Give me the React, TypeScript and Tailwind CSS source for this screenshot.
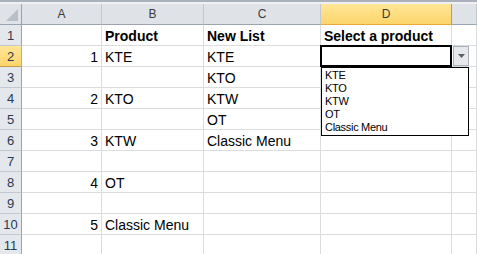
import React from "react";

const cols = ["A", "B", "C", "D", ""];

type Row = { a?: string; b?: string; c?: string; d?: string; bold?: boolean };

const rows: Row[] = [
  { b: "Product", c: "New List", d: "Select a product", bold: true },
  { a: "1", b: "KTE", c: "KTE" },
  { c: "KTO" },
  { a: "2", b: "KTO", c: "KTW" },
  { c: "OT" },
  { a: "3", b: "KTW", c: "Classic Menu" },
  {},
  { a: "4", b: "OT" },
  {},
  { a: "5", b: "Classic Menu" },
  {},
];

const options = ["KTE", "KTO", "KTW", "OT", "Classic Menu"];

function ColHeader({ label }: { label: string }) {
  if (label === "D") {
    return (
      <div className="h-[21px] border-r border-b border-r-[#c29b4b] border-b-[#e8a93a] bg-gradient-to-b from-[#ffe796] to-[#fcd46b] text-center text-[12px] leading-[21px] text-[#3b3b3b]">
        {label}
      </div>
    );
  }
  return (
    <div className="h-[21px] border-r border-b border-r-[#c3c8d0] border-b-[#9aa3ae] bg-[#dfe3e8] text-center text-[12px] leading-[21px] text-[#3b3b3b]">
      {label}
    </div>
  );
}

function Cell({ text, right, bold }: { text?: string; right?: boolean; bold?: boolean }) {
  return (
    <div
      className={`h-[21px] border-r border-b border-[#dadcdd] px-[3px] text-[14px] leading-[22px] text-black whitespace-nowrap ${
        right ? "text-right" : "text-left"
      } ${bold ? "font-bold" : ""}`}
    >
      {text}
    </div>
  );
}

export default function App() {
  return (
    <div
      className="relative h-[254px] w-[477px] overflow-hidden bg-white"
      style={{ fontFamily: '"Liberation Sans", Arial, sans-serif' }}
    >
      <div className="h-[2px] bg-[#aab1bb]" />
      <div className="h-[2px] bg-[#eef0f3]" />

      <div className="grid grid-cols-[22px_80px_102px_117px_131px_1fr]">
        {/* corner */}
        <div className="flex h-[21px] items-end justify-end border-r border-b border-r-[#9aa3ae] border-b-[#9aa3ae] bg-[#dfe3e8] p-[3px]">
          <svg width="12" height="12" viewBox="0 0 12 12">
            <polygon points="12,0 12,12 0,12" fill="#b9bfc7" />
          </svg>
        </div>
        {cols.map((c, i) => (
          <ColHeader key={i} label={c} />
        ))}

        {rows.map((r, i) => {
          const selected = i === 1;
          return (
            <React.Fragment key={i}>
              <div
                className={`h-[21px] border-r border-b text-center text-[13px] leading-[21px] text-[#2a3a52] ${
                  selected
                    ? "border-r-[#e8a93a] border-b-[#c29b4b] bg-gradient-to-b from-[#ffe796] to-[#fcd46b]"
                    : "border-r-[#9aa3ae] border-b-[#c3c8d0] bg-[#e4e7ec]"
                }`}
              >
                {i + 1}
              </div>
              <Cell text={r.a} right />
              <Cell text={r.b} bold={r.bold} />
              <Cell text={r.c} bold={r.bold} />
              <Cell text={r.d} bold={r.bold} />
              <Cell />
            </React.Fragment>
          );
        })}
      </div>

      {/* active cell D2 */}
      <div className="absolute left-[320px] top-[45px] h-[22px] w-[132px] border-2 border-black" />

      {/* dropdown arrow button */}
      <div className="absolute left-[453px] top-[46px] flex h-[20px] w-[16px] items-center justify-center border border-[#a9b0ba] bg-[#e6e8ec]">
        <svg width="7" height="4" viewBox="0 0 7 4">
          <polygon points="0,0 7,0 3.5,4" fill="#5a5f66" />
        </svg>
      </div>

      {/* validation list */}
      <div className="absolute left-[321px] top-[67px] w-[148px] border border-black bg-white py-[1px]">
        {options.map((o) => (
          <div key={o} className="h-[13px] pl-[3px] text-[11px] leading-[13px] tracking-[-0.3px] text-black">
            {o}
          </div>
        ))}
      </div>
    </div>
  );
}
